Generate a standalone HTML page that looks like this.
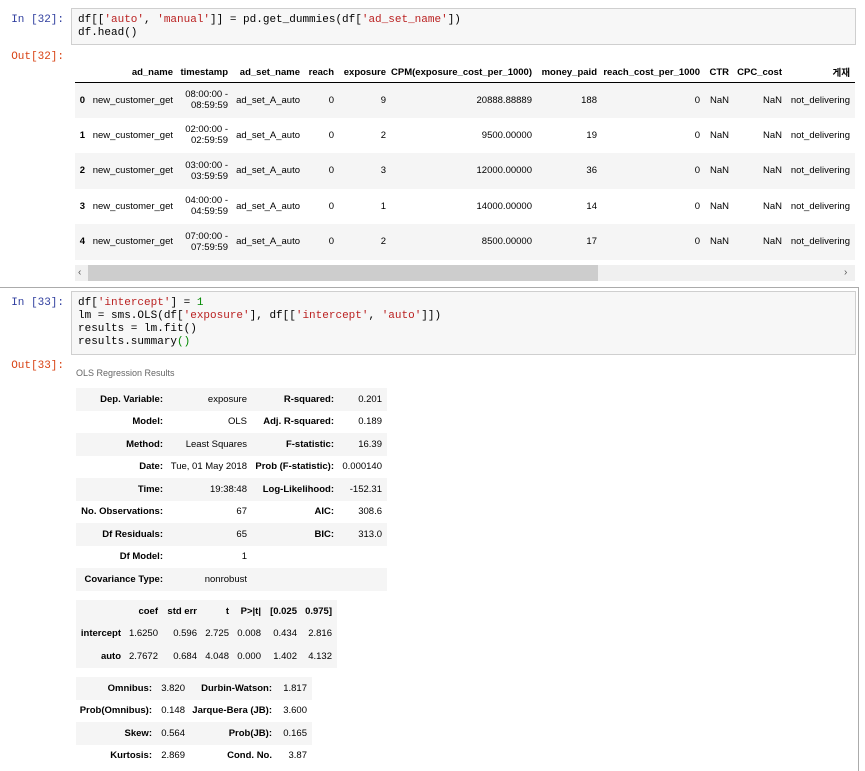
<!DOCTYPE html>
<html style="width:865px;height:771px;overflow:hidden"><head><meta charset="utf-8"><style>
*{margin:0;padding:0;box-sizing:border-box}
body{width:865px;height:771px;background:#fff;position:relative;overflow:hidden;font-family:"Liberation Sans","Noto Sans CJK KR",sans-serif;color:#000}
.abs{position:absolute}
.code{position:absolute;left:71px;width:785px;background:#f7f7f7;border:1px solid #cfcfcf;font-family:"Liberation Mono",monospace;font-size:11px;line-height:13px;padding:5px 6px;white-space:pre;color:#000}
.pin{position:absolute;width:64px;text-align:right;font-family:"Liberation Mono",monospace;font-size:11px;color:#303f9f}
.pout{position:absolute;width:64px;text-align:right;font-family:"Liberation Mono",monospace;font-size:11px;color:#d84315}
.s{color:#ba2121}.n{color:#080}
table{border-collapse:collapse;table-layout:fixed;position:absolute;font-size:9.5px}
td,th{text-align:right;padding:0 5px 0 0;white-space:nowrap;overflow:hidden}
th{font-weight:bold}
.df tr.h{height:19px}
.df tr.h th{border-bottom:1px solid #000}
.df tr.r{height:35.5px}
.g{background:#f5f5f5}
.st td,.st th{height:22.5px}
</style></head><body>
<div class="pin" style="left:0;top:14px">In [32]:</div>
<div class="code" style="top:8px;height:37px">df[[<span class="s">'auto'</span>, <span class="s">'manual'</span>]] = pd.get_dummies(df[<span class="s">'ad_set_name'</span>])
df.head()</div>
<div class="pout" style="left:0;top:51px">Out[32]:</div>
<table class="df" style="left:75px;top:63px;width:780px">
<colgroup><col style="width:15px"><col style="width:88px"><col style="width:55px"><col style="width:72px"><col style="width:34px"><col style="width:52px"><col style="width:146px"><col style="width:65px"><col style="width:103px"><col style="width:29px"><col style="width:53px"><col style="width:68px"></colgroup>
<tr class="h"><th></th><th>ad_name</th><th>timestamp</th><th>ad_set_name</th><th>reach</th><th>exposure</th><th>CPM(exposure_cost_per_1000)</th><th>money_paid</th><th>reach_cost_per_1000</th><th>CTR</th><th>CPC_cost</th><th>게재</th></tr>
<tr class="r g"><th>0</th><td>new_customer_get</td><td>08:00:00 -<br>08:59:59</td><td>ad_set_A_auto</td><td>0</td><td>9</td><td>20888.88889</td><td>188</td><td>0</td><td>NaN</td><td>NaN</td><td>not_delivering</td></tr>
<tr class="r"><th>1</th><td>new_customer_get</td><td>02:00:00 -<br>02:59:59</td><td>ad_set_A_auto</td><td>0</td><td>2</td><td>9500.00000</td><td>19</td><td>0</td><td>NaN</td><td>NaN</td><td>not_delivering</td></tr>
<tr class="r g"><th>2</th><td>new_customer_get</td><td>03:00:00 -<br>03:59:59</td><td>ad_set_A_auto</td><td>0</td><td>3</td><td>12000.00000</td><td>36</td><td>0</td><td>NaN</td><td>NaN</td><td>not_delivering</td></tr>
<tr class="r"><th>3</th><td>new_customer_get</td><td>04:00:00 -<br>04:59:59</td><td>ad_set_A_auto</td><td>0</td><td>1</td><td>14000.00000</td><td>14</td><td>0</td><td>NaN</td><td>NaN</td><td>not_delivering</td></tr>
<tr class="r g"><th>4</th><td>new_customer_get</td><td>07:00:00 -<br>07:59:59</td><td>ad_set_A_auto</td><td>0</td><td>2</td><td>8500.00000</td><td>17</td><td>0</td><td>NaN</td><td>NaN</td><td>not_delivering</td></tr>
</table>
<div class="abs" style="left:75px;top:265px;width:780px;height:16px;background:#f0f0f0"></div>
<div class="abs" style="left:88px;top:265px;width:510px;height:16px;background:#cdcdcd"></div>
<div class="abs" style="left:78px;top:265px;font-size:10px;color:#555;line-height:16px">&lsaquo;</div>
<div class="abs" style="left:844px;top:265px;font-size:10px;color:#555;line-height:16px">&rsaquo;</div>
<div class="abs" style="left:-2px;top:287px;width:861px;height:484px;border:1px solid #ababab;border-bottom:none"></div>
<div class="pin" style="left:0;top:297px">In [33]:</div>
<div class="code" style="top:291px;height:64px">df[<span class="s">'intercept'</span>] = <span class="n">1</span>
lm = sms.OLS(df[<span class="s">'exposure'</span>], df[[<span class="s">'intercept'</span>, <span class="s">'auto'</span>]])
results = lm.fit()
results.summary<span class="n">()</span></div>
<div class="pout" style="left:0;top:360px">Out[33]:</div>
<div class="abs" style="left:76px;top:368px;font-size:9px;color:#666">OLS Regression Results</div>
<table class="st" style="left:76px;top:388px;width:311px">
<colgroup><col style="width:92px"><col style="width:84px"><col style="width:87px"><col style="width:48px"></colgroup>
<tr class="g"><th>Dep. Variable:</th><td>exposure</td><th>R-squared:</th><td>0.201</td></tr>
<tr><th>Model:</th><td>OLS</td><th>Adj. R-squared:</th><td>0.189</td></tr>
<tr class="g"><th>Method:</th><td>Least Squares</td><th>F-statistic:</th><td>16.39</td></tr>
<tr><th>Date:</th><td>Tue, 01 May 2018</td><th>Prob (F-statistic):</th><td>0.000140</td></tr>
<tr class="g"><th>Time:</th><td>19:38:48</td><th>Log-Likelihood:</th><td>-152.31</td></tr>
<tr><th>No. Observations:</th><td>67</td><th>AIC:</th><td>308.6</td></tr>
<tr class="g"><th>Df Residuals:</th><td>65</td><th>BIC:</th><td>313.0</td></tr>
<tr><th>Df Model:</th><td>1</td><th></th><td></td></tr>
<tr class="g"><th>Covariance Type:</th><td>nonrobust</td><th></th><td></td></tr>
</table>
<table class="st" style="left:76px;top:600px;width:261px">
<colgroup><col style="width:50px"><col style="width:37px"><col style="width:39px"><col style="width:32px"><col style="width:32px"><col style="width:36px"><col style="width:35px"></colgroup>
<tr class="g"><th></th><th>coef</th><th>std err</th><th>t</th><th>P&gt;|t|</th><th>[0.025</th><th>0.975]</th></tr>
<tr class="g"><th>intercept</th><td>1.6250</td><td>0.596</td><td>2.725</td><td>0.008</td><td>0.434</td><td>2.816</td></tr>
<tr class="g"><th>auto</th><td>2.7672</td><td>0.684</td><td>4.048</td><td>0.000</td><td>1.402</td><td>4.132</td></tr>
</table>
<table class="st" style="left:76px;top:677px;width:236px">
<colgroup><col style="width:81px"><col style="width:33px"><col style="width:87px"><col style="width:35px"></colgroup>
<tr class="g"><th>Omnibus:</th><td>3.820</td><th>Durbin-Watson:</th><td>1.817</td></tr>
<tr><th>Prob(Omnibus):</th><td>0.148</td><th>Jarque-Bera (JB):</th><td>3.600</td></tr>
<tr class="g"><th>Skew:</th><td>0.564</td><th>Prob(JB):</th><td>0.165</td></tr>
<tr><th>Kurtosis:</th><td>2.869</td><th>Cond. No.</th><td>3.87</td></tr>
</table>
</body></html>
